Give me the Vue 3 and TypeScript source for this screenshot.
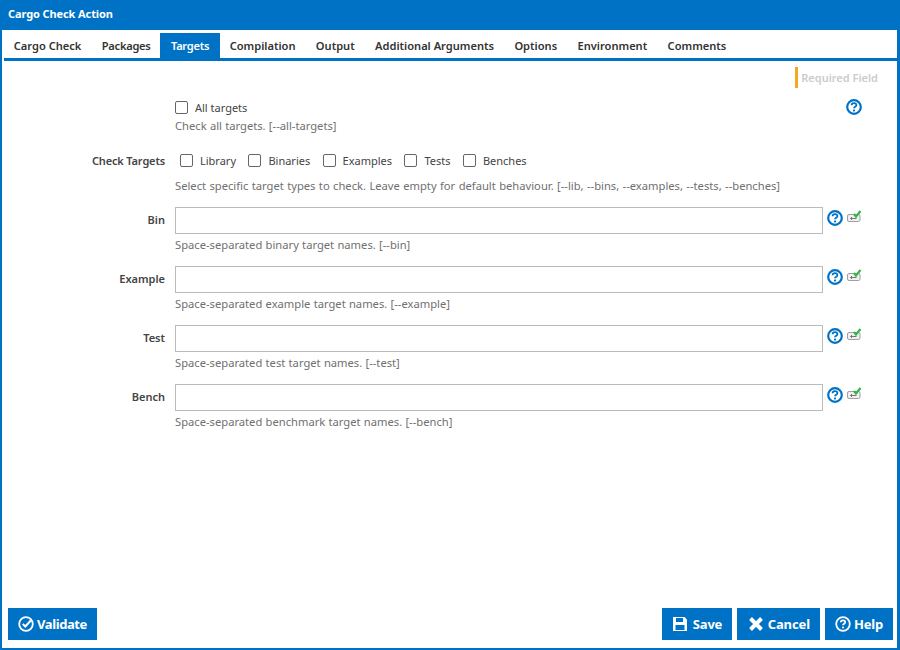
<script setup lang="ts">
const tabs: string[] = ['Cargo Check', 'Packages', 'Targets', 'Compilation', 'Output', 'Additional Arguments', 'Options', 'Environment', 'Comments']
const targets: string[] = ['Library', 'Binaries', 'Examples', 'Tests', 'Benches']
const fields = [
  { label: 'Bin', hint: 'Space-separated binary target names. [--bin]' },
  { label: 'Example', hint: 'Space-separated example target names. [--example]' },
  { label: 'Test', hint: 'Space-separated test target names. [--test]' },
  { label: 'Bench', hint: 'Space-separated benchmark target names. [--bench]' },
]
</script>

<template>
  <div class="window">
    <header class="title">Cargo Check Action</header>
    <nav class="tabs">
      <span v-for="t in tabs" :key="t" class="tab" :class="{ active: t === 'Targets', tight: t === 'Targets' || t === 'Packages' }">{{ t }}</span>
    </nav>
    <main class="body">
      <div class="required-row"><span class="required">Required Field</span></div>

      <section class="row all-row">
        <div class="label"></div>
        <div class="field">
          <label class="check"><span class="box"></span>All targets</label>
          <p class="hint all-hint">Check all targets. [--all-targets]</p>
        </div>
        <svg class="help lone" viewBox="0 0 16 16"><circle cx="8" cy="8" r="6.8" fill="none" stroke="#0072c6" stroke-width="2.200" /><path d="M5.6 6.300c0-1.300 1.100-2.100 2.400-2.100s2.400.8 2.400 2c0 1.700-2.400 1.600-2.400 3.100" fill="none" stroke="#0072c6" stroke-width="1.800" /><rect x="7" y="10.600" width="2" height="1.800" fill="#0072c6" /></svg>
      </section>

      <section class="row targets-row">
        <div class="label strong">Check Targets</div>
        <div class="field">
          <div class="checks">
            <label v-for="t in targets" :key="t" class="check"><span class="box"></span>{{ t }}</label>
          </div>
          <p class="hint targets-hint">Select specific target types to check. Leave empty for default behaviour. [--lib, --bins, --examples, --tests, --benches]</p>
        </div>
      </section>

      <section v-for="f in fields" :key="f.label" class="row input-row">
        <div class="label strong input-label">{{ f.label }}</div>
        <div class="field">
          <div class="input"></div>
          <p class="hint input-hint">{{ f.hint }}</p>
        </div>
        <div class="tools">
          <svg class="help" viewBox="0 0 16 16"><circle cx="8" cy="8" r="6.800" fill="none" stroke="#0072c6" stroke-width="2.200" /><path d="M5.600 6.300c0-1.300 1.100-2.100 2.400-2.100s2.400.8 2.400 2c0 1.700-2.400 1.600-2.400 3.100" fill="none" stroke="#0072c6" stroke-width="1.800" /><rect x="7" y="10.600" width="2" height="1.800" fill="#0072c6" /></svg>
          <svg class="var" viewBox="0 0 15 14"><rect x="0.500" y="4.500" width="12.500" height="7" rx="1.500" fill="#f0f0f0" stroke="#a0a0a0" /><path d="M9.500 8.500H3.500M5 7 3.500 8.500 5 10" fill="none" stroke="#777" /><path d="M7 4 9 6.500 13.500 1" fill="none" stroke="#35b54a" stroke-width="2.200" /></svg>
        </div>
      </section>
    </main>
    <footer class="foot">
      <button class="btn validate">
        <svg viewBox="0 0 16 16"><circle cx="8" cy="8" r="6.800" fill="none" stroke="#fff" stroke-width="1.800" /><path d="M4.800 8 7.300 10.500 12.800 4.500" fill="none" stroke="#fff" stroke-width="2" /></svg>Validate
      </button>
      <div class="spacer"></div>
      <button class="btn save">
        <svg viewBox="0 0 16 16"><path d="M1 1h11.500L15 3.500V15H1z" fill="#fff" /><rect x="4" y="2" width="7" height="4" fill="#0072c6" /><rect x="3.500" y="9" width="9" height="5" fill="#0072c6" /></svg>Save
      </button>
      <button class="btn cancel">
        <svg viewBox="0 0 16 16"><path d="M2.500 2.500 13.500 13.500M13.500 2.500 2.500 13.500" stroke="#fff" stroke-width="4" /></svg>Cancel
      </button>
      <button class="btn help-btn">
        <svg viewBox="0 0 16 16"><circle cx="8" cy="8" r="6.800" fill="none" stroke="#fff" stroke-width="1.800" /><path d="M5.800 6.300c0-1.300 1-2 2.200-2s2.200.8 2.200 1.900c0 1.600-2.200 1.600-2.200 3.100" fill="none" stroke="#fff" stroke-width="1.700" /><rect x="7.100" y="10.600" width="1.800" height="1.700" fill="#fff" /></svg>Help
      </button>
    </footer>
  </div>
</template>

<style>
html, body { margin: 0; padding: 0; }
</style>

<style scoped>
.window {
  width: 900px;
  height: 650px;
  box-sizing: border-box;
  border: solid #0072c6;
  border-width: 0 3px 2px 2px;
  background: #fff;
  display: flex;
  flex-direction: column;
  font-family: "Noto Sans", "Open Sans", sans-serif;
  font-size: 12px;
  color: #333;
}
.title {
  height: 30px;
  margin: 0 -3px 0 -2px;
  padding-left: 8px;
  background: #0072c6;
  color: #fff;
  font-size: 11px;
  font-weight: 700;
  letter-spacing: -0.100px;
  line-height: 28px;
}
.tabs {
  display: flex;
  height: 25px;
  margin: 3px 0 0 2px;
  border-bottom: 3px solid #0072c6;
  padding-left: 0;
}
.tab {
  padding: 0 10.200px;
  line-height: 25px;
  font-weight: 600;
  font-size: 11.100px;
  color: #333;
}
.tab:first-child { margin-left: -0.500px; }
.tight { letter-spacing: -0.250px; }
.active { background: #0072c6; color: #fff; padding: 0 10.800px 0 11px; margin: 0 -0.600px 0 -0.800px; }
.body { flex: 1; }
.required-row { display: flex; justify-content: flex-end; padding: 6px 19px 0 0; }
.required {
  border-left: 3px solid #f5a623;
  padding-left: 3px;
  height: 21px;
  line-height: 21px;
  color: #ccc;
  font-weight: 600;
  font-size: 11px;
}
.row { display: flex; position: relative; }
.label { width: 163px; text-align: right; flex: none; }
.strong { font-weight: 600; color: #444; font-size: 11px; }
.field { width: 648px; margin-left: 10px; flex: none; }
.hint { margin: 0; color: #707070; font-size: 11.200px; word-spacing: 0.350px; line-height: 16px; }
.check { display: inline-flex; align-items: center; color: #444; height: 16px; font-size: 11px; }
.box {
  width: 11px;
  height: 11px;
  border: 1px solid #666;
  border-radius: 2px;
  margin-right: 7px;
}
.all-row { padding-top: 11px; }
.all-hint { margin-top: 0; }
.lone { position: absolute; left: 844px; top: 11px; width: 16px; height: 16px; }
.targets-row { margin-top: 19px; }
.targets-row .label { line-height: 16px; letter-spacing: -0.150px; }
.checks { display: flex; gap: 12.400px; padding-left: 5px; }
.targets-hint { margin-top: 9px; word-spacing: 0.480px; }
.input-row { margin-top: 0; height: 59px; }
.targets-row + .input-row { margin-top: 13px; }
.input { height: 25px; border: 1px solid #bbb; }
.input-label { line-height: 25px; }
.input-hint { margin-top: 3px; }
.tools { display: flex; margin-left: 4px; gap: 4px; align-items: flex-start; padding-top: 3px; }
.help { width: 16px; height: 16px; display: block; }
.var { width: 15px; height: 14px; display: block; }
.foot { display: flex; gap: 5px; padding: 0 4px 8px 6px; }
.spacer { flex: 1; }
.btn {
  height: 32px;
  border: 0;
  padding: 0 10px;
  background: #0072c6;
  color: #fff;
  font-family: inherit;
  font-size: 13px;
  letter-spacing: -0.200px;
  font-weight: 700;
  display: flex;
  align-items: center;
  gap: 4px;
}
.validate { gap: 3px; letter-spacing: -0.400px; }
.save { gap: 5px; }
.cancel { gap: 3.500px; padding-left: 11px; letter-spacing: -0.100px; }
.help-btn { gap: 3px; }
.btn svg { width: 16px; height: 16px; }
</style>
